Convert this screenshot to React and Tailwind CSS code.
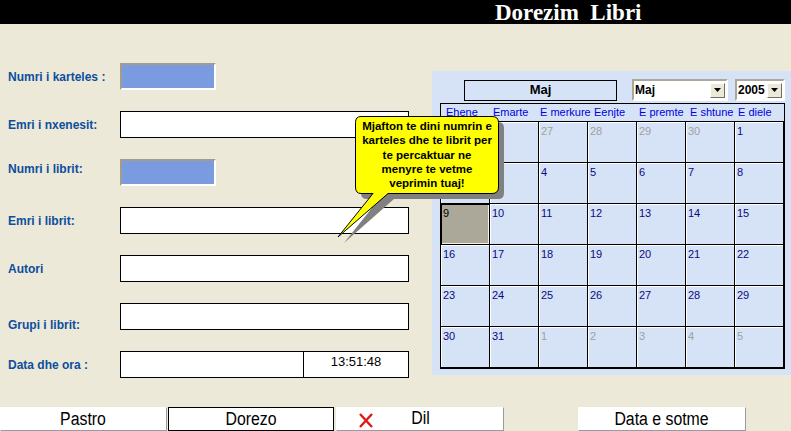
import React from "react";

/* ===============================
   DATA
=============================== */
const fields = [
  { label: "Numri i karteles :", kind: "blue", lt: "mt-[7px]" },
  { label: "Emri i nxenesit:", kind: "text", lt: "mt-[7px]" },
  { label: "Numri i librit:", kind: "blue", lt: "mt-[3px]" },
  { label: "Emri i librit:", kind: "text", lt: "mt-[7px]" },
  { label: "Autori", kind: "text", lt: "mt-[7px]" },
  { label: "Grupi i librit:", kind: "text", lt: "mt-[15px]" },
  { label: "Data dhe ora :", kind: "time", lt: "mt-[7px]" },
];

const dayNames = [
  { n: "Ehene", pl: "pl-[5px]" },
  { n: "Emarte", pl: "pl-[3px]" },
  { n: "E merkure", pl: "pl-[1px]" },
  { n: "Eenjte", pl: "pl-[6px]" },
  { n: "E premte", pl: "pl-[2px]" },
  { n: "E shtune", pl: "pl-[4px]" },
  { n: "E diele", pl: "pl-[3px]" },
];

const weeks = [
  [25, 26, 27, 28, 29, 30, 1],
  [2, 3, 4, 5, 6, 7, 8],
  [9, 10, 11, 12, 13, 14, 15],
  [16, 17, 18, 19, 20, 21, 22],
  [23, 24, 25, 26, 27, 28, 29],
  [30, 31, 1, 2, 3, 4, 5],
];

const font = "font-['Liberation_Sans',Arial,sans-serif]";

export default function App() {
  return (
    <div
      className={`relative w-[791px] h-[431px] overflow-hidden bg-[#ECE9D8] ${font}`}
    >
      {/* ===============================
         TITLE BAR
      =============================== */}
      <div className="h-[24px] bg-black flex items-center pl-[495px]">
        <span className="whitespace-pre text-white font-bold text-[23px] leading-none font-['Liberation_Serif',serif]">
          Dorezim  Libri
        </span>
      </div>

      <div className="flex">
        {/* ===============================
           FORM
        =============================== */}
        <div className="w-[432px] pt-[39px] flex flex-col gap-[21px]">
          {fields.map((f) => (
            <div key={f.label} className="flex h-[27px] items-start">
              <span
                className={`w-[120px] pl-[8px] text-[12px] leading-[15px] font-bold text-[#0D4E9E] ${f.lt}`}
              >
                {f.label}
              </span>
              {f.kind === "blue" && (
                <div className="w-[96px] h-[27px] bg-[#7B9BE0] border-2 border-t-[#A29D8A] border-l-[#A29D8A] border-r-white border-b-white" />
              )}
              {f.kind === "text" && (
                <div className="w-[289px] h-[27px] bg-white border border-black" />
              )}
              {f.kind === "time" && (
                <div className="w-[289px] h-[27px] bg-white border border-black flex">
                  <div className="w-[183px] border-r border-black" />
                  <div className="flex-1 text-center text-[13px] leading-[15px] pt-[2px] text-black">
                    13:51:48
                  </div>
                </div>
              )}
            </div>
          ))}
        </div>

        {/* ===============================
           CALENDAR
        =============================== */}
        <div className="mt-[47px] w-[359px] h-[304px] bg-[#D6E3F7] pt-[7px] pl-[8px]">
          <div className="flex items-center h-[24px]">
            <div className="ml-[24px] w-[153px] h-[21px] border border-black flex items-center justify-center text-[13px] font-bold text-black">
              Maj
            </div>
            <Select value="Maj" w="w-[96px]" className="ml-[15px]" />
            <Select value="2005" w="w-[50px]" className="ml-[7px]" />
          </div>

          <div className="mt-[1px] w-[345px] border border-black">
            <div className="flex h-[18px] border-b border-black">
              {dayNames.map((d) => (
                <div
                  key={d.n}
                  className={`w-[49px] shrink-0 whitespace-nowrap text-[11px] leading-[17px] text-[#0000E0] ${d.pl}`}
                >
                  {d.n}
                </div>
              ))}
            </div>
            {weeks.map((w, wi) => (
              <div key={wi} className="flex">
                {w.map((d, di) => {
                  const other = (wi === 0 && d > 7) || (wi === 5 && d < 20);
                  const sel = wi === 2 && di === 0;
                  return (
                    <div
                      key={di}
                      className={`w-[49px] h-[41px] shrink-0 border-r border-b border-black pl-[2px] pt-[3px] text-[11px] leading-[13px] ${
                        sel
                          ? "bg-[#ACA899] text-black shadow-[inset_1px_1px_0_#000,inset_-1px_-1px_0_#F4F2E8]"
                          : other
                          ? "text-[#A0A0A0] shadow-[inset_1px_1px_0_#fff]"
                          : "text-[#0A0A80] shadow-[inset_1px_1px_0_#fff]"
                      }`}
                    >
                      {d}
                    </div>
                  );
                })}
              </div>
            ))}
          </div>
        </div>
      </div>

      {/* ===============================
         BUTTONS
      =============================== */}
      <div className="absolute left-0 top-[407px] flex h-[24px] text-[18px] text-black">
        <Btn label="Pastro" w="w-[167px]" />
        <Btn label="Dorezo" w="w-[166px]" className="ml-[1px]" focused />
        <Btn label="Dil" w="w-[168px]" className="ml-[2px]" icon />
        <Btn label="Data e sotme" w="w-[168px]" className="ml-[74px]" />
      </div>

      {/* ===============================
         TOOLTIP
      =============================== */}
      <div className="absolute left-[330px] top-[110px] w-[180px] h-[140px]">
        <svg width="180" height="140" className="absolute left-0 top-0">
          <path
            d="M31 12 H168 Q174 12 174 18 V83 Q174 89 168 89 H64 L14 133 L49 89 H37 Q31 89 31 83 V18 Q31 12 37 12 Z"
            fill="#808080"
          />
          <path
            d="M31 6.5 H162 Q168.5 6.5 168.5 12.5 V77 Q168.5 83.5 162 83.5 H58 L8 127 L43 83.5 H31 Q25.5 83.5 25.5 77 V12.5 Q25.5 6.5 31 6.5 Z"
            fill="#FFFF00"
            stroke="#000"
            strokeWidth="1"
          />
        </svg>
        <div className="absolute left-[25px] top-[9px] w-[144px] text-center text-[11.5px] leading-[14.3px] font-bold text-black">
          Mjafton te dini numrin e
          <br />
          karteles dhe te librit per
          <br />
          te percaktuar ne
          <br />
          menyre te vetme
          <br />
          veprimin tuaj!
        </div>
      </div>
    </div>
  );
}

/* ===============================
   UI COMPONENTS
=============================== */
function Select({ value, w, className = "" }) {
  return (
    <div
      className={`${w} ${className} h-[22px] bg-white border-2 border-t-[#ACA899] border-l-[#ACA899] border-r-white border-b-white flex items-center`}
    >
      <span className="flex-1 pl-[1px] text-[12px] font-bold text-black leading-none">
        {value}
      </span>
      <div className="w-[15px] h-[15px] mr-[1px] bg-[#ECE9D8] border border-t-white border-l-white border-r-[#716F64] border-b-[#716F64] flex items-center justify-center">
        <svg width="7" height="4" viewBox="0 0 7 4">
          <path d="M0 0 H7 L3.5 4 Z" fill="#000" />
        </svg>
      </div>
    </div>
  );
}

function Btn({ label, w, className = "", focused, icon }) {
  return (
    <div
      className={`${w} ${className} relative h-[24px] bg-white flex items-center justify-center leading-none ${
        focused
          ? "border border-black"
          : "border border-t-white border-l-white border-r-[#9A9A9A] border-b-[#9A9A9A]"
      }`}
    >
      {icon && (
        <svg
          width="16"
          height="15"
          viewBox="0 0 16 15"
          className="absolute left-[21px] top-[5px]"
        >
          <path d="M2 1 L14 14 M14 1 L2 14" stroke="#E01818" strokeWidth="2.4" />
        </svg>
      )}
      <span className={`inline-block scale-x-[0.88] ${icon ? "-mt-[2px]" : ""}`}>
        {label}
      </span>
    </div>
  );
}
